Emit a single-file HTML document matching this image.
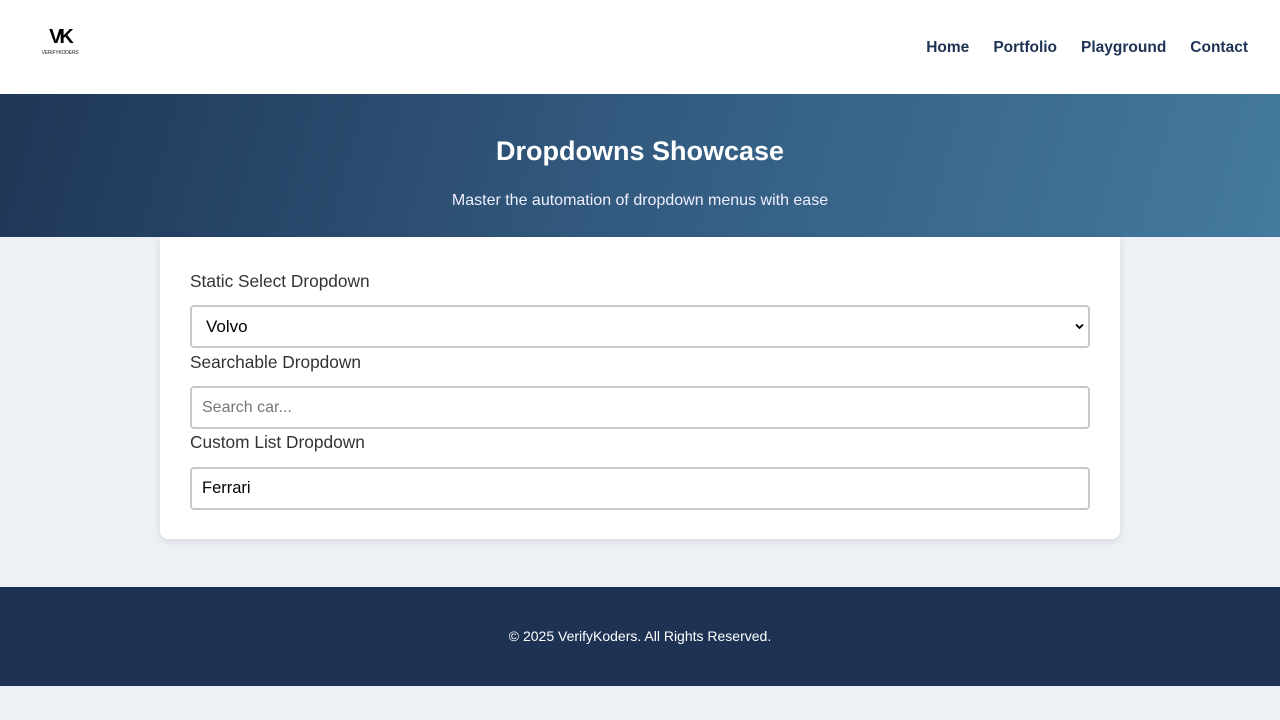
<!DOCTYPE html>
<html><head><style>
*{box-sizing:border-box;margin:0;padding:0}
body{width:1280px;height:720px;background:#edf1f5;font-family:"Liberation Sans",sans-serif;overflow:hidden}
header{height:94px;background:#fff;position:relative}
.logo{position:absolute;left:38px;top:29px;width:44px;text-align:center}
.logo b{display:block;font-size:20px;font-weight:900;letter-spacing:-3px;line-height:17px;color:#000}
.logo span{display:block;font-size:5px;color:#222;margin-top:4px;letter-spacing:-.2px}
nav{position:absolute;right:32px;top:39px;display:flex;gap:24px;font-size:15.5px;font-weight:bold;color:#1e3354}
.hero{height:143px;background:linear-gradient(105deg,#1f3656 0%,#335b80 50%,#437a9e 100%);color:#fff;text-align:center}
.hero h1{font-size:27px;padding-top:40px;line-height:34px}
.hero p{font-size:16px;margin-top:24px;color:#eef}
.card{position:absolute;left:160px;top:237px;width:960px;height:302px;background:#fff;border-radius:0 0 8px 8px;box-shadow:0 2px 8px rgba(0,0,0,.1);padding:0 30px}
label{display:block;font-size:17.3px;color:#333;position:absolute;left:30px}
.f{position:absolute;left:30px;width:900px;height:43px;border:2px solid #c9c9c9;border-radius:4px;font-size:17px;padding:0 10px;line-height:39px;color:#000}
footer{position:absolute;top:587px;left:0;width:1280px;height:99px;background:#1e3354;color:#fff;text-align:center;font-size:14px;line-height:99px}
</style></head><body>
<header><div class="logo"><b>VK</b><span>VERIFYKODERS</span></div>
<nav><span>Home</span><span>Portfolio</span><span>Playground</span><span>Contact</span></nav></header>
<div class="hero"><h1>Dropdowns Showcase</h1><p>Master the automation of dropdown menus with ease</p></div>
<div class="card">
<label style="top:34px">Static Select Dropdown</label>
<div class="f" style="top:68px;padding-left:14px">Volvo<svg style="position:absolute;right:4px;top:16px" width="9" height="7" viewBox="0 0 9 7"><path d="M1 1.5L4.5 5L8 1.5" fill="none" stroke="#000" stroke-width="1.8"/></svg></div>
<label style="top:115px">Searchable Dropdown</label>
<div class="f" style="top:149px;color:#777;font-size:16px">Search car...</div>
<label style="top:195px">Custom List Dropdown</label>
<div class="f" style="top:230px;font-size:16.5px">Ferrari</div>
</div>
<footer>© 2025 VerifyKoders. All Rights Reserved.</footer>
</body></html>
